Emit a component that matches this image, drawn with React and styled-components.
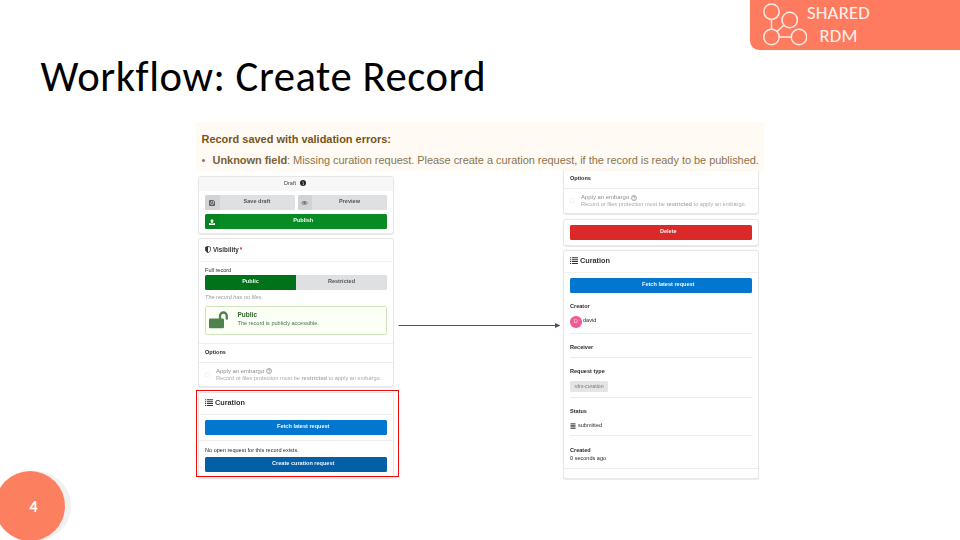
import React from 'react';
import styled, { createGlobalStyle } from 'styled-components';

const Global = createGlobalStyle`
  * { box-sizing: border-box; }
  body { margin: 0; background: #fff; }
  svg { display: block; flex-shrink: 0; }
`;

const Slide = styled.main`
  position: relative;
  width: 960px;
  height: 540px;
  overflow: hidden;
  background: #fff;
  font-family: "Liberation Sans", Arial, sans-serif;
`;
const Header = styled.header`
  display: flex;
  justify-content: flex-end;
  height: 50px;
`;
const Brand = styled.div`
  display: flex;
  width: 210px;
  height: 50px;
  padding-left: 12px;
  border-bottom-left-radius: 9px;
  background: #ff7b5f;
  color: #fff0ec;
`;
const BrandName = styled.div`
  width: 66px;
  margin: 1px 0 0 -1.5px;
  text-align: center;
  font: 400 18.7px/23px Carlito, "Open Sans", sans-serif;
  letter-spacing: 0.2px;
  white-space: nowrap;
`;
const Title = styled.h1`
  height: 72px;
  margin: 0;
  padding-left: 40.5px;
  font: 400 42.67px/53px Carlito, Lato, sans-serif;
  letter-spacing: 0.55px;
  color: #000;
  white-space: nowrap;
`;
const Figure = styled.section`
  position: relative;
  width: 568px;
  margin-left: 196px;
`;
const Alert = styled.div`
  height: 49px;
  padding: 8px 0 0 5.5px;
  background: #fffaf3;
  color: #8a7550;
  font-size: 11px;
  letter-spacing: -0.045px;
  white-space: nowrap;
  & b { color: #7c6236; }
`;
const AlertTitle = styled.div`
  height: 20.5px;
  line-height: 18px;
  font-weight: 700;
  letter-spacing: -0.02px;
  color: #775520;
`;
const AlertItem = styled.div`
  display: flex;
  line-height: 19px;
  & > i { width: 11px; font-style: normal; }
`;
const Columns = styled.div`
  display: flex;
  padding-left: 2px;
`;
const Column = styled.div`
  width: 196px;
  padding-top: ${(p) => p.$top || 0}px;
  filter: blur(0.3px);
`;
const Card = styled.section`
  height: ${(p) => p.$h}px;
  margin-bottom: ${(p) => p.$gap ?? 4.5}px;
  padding: ${(p) => (p.$open ? 4 : 0)}px 6px 0;
  border: 1px solid #e7e7e8;
  border-top-width: ${(p) => (p.$open ? 0 : 1)}px;
  border-radius: ${(p) => (p.$open ? '0 0 3px 3px' : '3px')};
  box-shadow: 0 0.5px 1px #e9e9e9;
  background: #fff;
`;
const CardTop = styled.div`
  display: flex;
  align-items: center;
  justify-content: center;
  gap: 4px;
  height: 14px;
  margin: 0 -6px 4px;
  padding-right: 2px;
  padding-bottom: 2px;
  background: #f7f7f7;
  color: #444;
  font-size: 5.6px;
`;
const Heading = styled.h2`
  display: flex;
  align-items: center;
  gap: 2px;
  height: ${(p) => p.$h || 22}px;
  margin: 0 -6px;
  padding: 0 6px 2px;
  border-bottom: 1px solid #f1f1f1;
  color: #333;
  font-size: ${(p) => p.$size || 7.3}px;
  font-weight: 700;
  white-space: nowrap;
`;
const Star = styled.span`
  margin-left: -1px;
  color: #db2828;
`;
const Row = styled.div`
  display: flex;
  gap: ${(p) => p.$gap || 0}px;
  margin-bottom: ${(p) => p.$mb || 0}px;
`;
const tones = {
  grey: ['#dfe0e1', '#555'],
  green: ['#078b23', '#f0fbf1'],
  dark: ['#007219', '#f0fbf1'],
  blue: ['#0377cf', '#eef8ff'],
  navy: ['#035fa6', '#eef8ff'],
  red: ['#db2828', '#fff0f0'],
};
const Button = styled.div`
  display: flex;
  flex: 1;
  height: 15px;
  margin-top: ${(p) => p.$mt || 0}px;
  padding-left: ${(p) => p.$indent || 0}px;
  overflow: hidden;
  border-radius: ${(p) => p.$radius || '1.5px'};
  background: ${(p) => tones[p.$tone][0]};
  color: ${(p) => tones[p.$tone][1]};
  font-size: 5.55px;
  font-weight: 700;
  line-height: 13.5px;
`;
const ButtonIcon = styled.span`
  display: flex;
  align-items: center;
  justify-content: center;
  width: 14.5px;
  background: rgba(0, 0, 0, 0.055);
  padding-top: 1px;
`;
const ButtonLabel = styled.span`
  flex: 1;
  text-align: center;
  white-space: nowrap;
`;
const Line = styled.div`
  height: ${(p) => p.$h || 7}px;
  margin-top: ${(p) => p.$mt || 0}px;
  color: ${(p) => p.$color || '#2b2b2b'};
  font-size: ${(p) => p.$size || 5.55}px;
  font-weight: ${(p) => (p.$bold ? 700 : 400)};
  font-style: ${(p) => (p.$italic ? 'italic' : 'normal')};
  line-height: ${(p) => p.$h || 7}px;
  white-space: nowrap;
`;
const Rule = styled.div`
  height: 1px;
  margin: ${(p) => p.$mt || 0}px ${(p) => (p.$wide ? -6 : 0)}px 0;
  background: #ededed;
`;
const Notice = styled.div`
  display: flex;
  gap: 10px;
  height: 28.5px;
  margin-top: 5px;
  padding: 4px 2.5px;
  border: 1px solid #cfe4bd;
  border-radius: 1.5px;
  background: #fcfff5;
`;
const Embargo = styled.div`
  display: flex;
  gap: 6px;
  padding-top: ${(p) => p.$top || 5}px;
`;
const Check = styled.span`
  width: 5px;
  height: 5px;
  margin-top: 4px;
  border: 0.5px solid #f3f3f3;
  border-radius: 1px;
`;
const Inline = styled.span`
  display: flex;
  align-items: center;
  gap: ${(p) => p.$gap || 2}px;
`;
const Connector = styled.div`
  width: 169px;
  padding: 149.5px 0 0 4px;
`;
const Highlight = styled.div`
  position: absolute;
  top: 268px;
  left: 0;
  width: 203px;
  height: 87px;
  border: 1px solid #f00b0b;
`;
const Avatar = styled.span`
  width: 11.5px;
  height: 11.5px;
  border-radius: 50%;
  background: #ee5b95;
  color: #ffd5e4;
  font-size: 5.5px;
  line-height: 11.5px;
  text-align: center;
`;
const User = styled.div`
  display: flex;
  gap: 1.5px;
  height: 12px;
  margin-top: 6.5px;
`;
const Tag = styled.div`
  width: 38px;
  height: 11px;
  margin-top: 6px;
  border-radius: 1.5px;
  background: #e5e5e5;
  color: #777;
  font-size: 5.2px;
  line-height: 10.5px;
  text-align: center;
  white-space: nowrap;
`;
const PageBadge = styled.div`
  position: absolute;
  left: -1px;
  top: 471px;
  width: 72px;
  height: 70px;
  border-radius: 50%;
  background: #f1f1f1;
`;
const PageNumber = styled.div`
  width: 70px;
  height: 70px;
  margin-left: -4.5px;
  padding-left: 8px;
  border-radius: 50%;
  background: #fc8060;
  color: #fff;
  font: 700 16px/71px Carlito, "Open Sans", sans-serif;
  text-align: center;
`;

const Logo = () => (
  <svg width="45" height="50" viewBox="0 0 45 50" fill="none" stroke="#ffeae5" strokeWidth="1.5">
    <circle cx="9.5" cy="11.7" r="7.7" />
    <circle cx="27.7" cy="20" r="7.7" />
    <circle cx="9.5" cy="37" r="7.7" />
    <circle cx="37" cy="37" r="7.7" />
    <path d="M9.5 19.4V29.3M15.2 31.4l6.6-6.1M17.2 37h12.1" />
  </svg>
);
const ListIcon = () => (
  <svg width="8" height="7" viewBox="0 0 8 7" fill="#333">
    <path d="M0 .3h1.2v1H0zM2 .3h6v1H2zM0 2.2h1.2v1H0zM2 2.2h6v1H2zM0 4.1h1.2v1H0zM2 4.1h6v1H2zM0 6h1.2v1H0zM2 6h6v1H2z" />
  </svg>
);
const ShieldIcon = () => (
  <svg width="6" height="7" viewBox="0 0 6 7">
    <path d="M3 .4 5.6 1.3v2C5.6 5 4.4 6.1 3 6.7 1.6 6.1.4 5 .4 3.3v-2z" fill="#fff" stroke="#333" strokeWidth=".8" />
    <path d="M3 .3v6.4C1.6 6.1.4 5 .4 3.3v-2z" fill="#333" />
  </svg>
);
const InfoIcon = () => (
  <svg width="6" height="6" viewBox="0 0 6 6">
    <circle cx="3" cy="3" r="3" fill="#222" />
    <path d="M2.5 2.6h.9v2M2.5 4.6h1.3M3 1v.9" stroke="#fff" strokeWidth=".5" fill="none" />
  </svg>
);
const HelpIcon = () => (
  <svg width="6" height="6" viewBox="0 0 6 6" fill="none" stroke="#888" strokeWidth=".7">
    <circle cx="3" cy="3" r="2.5" />
    <path d="M2 2.3c0-1.1 2-1 2 0S3 2.7 3 3.6M3 4v.6" />
  </svg>
);
const SaveIcon = () => (
  <svg width="6" height="6" viewBox="0 0 6 6" fill="none" stroke="#555" strokeWidth=".9">
    <path d="M.5.5h4l1 1v4h-5zM1.6.5v1.8h2.3V.5M1.6 5.5V3.8h2.8v1.7" />
  </svg>
);
const EyeIcon = () => (
  <svg width="7" height="4" viewBox="0 0 7 4">
    <path d="M.3 2C2-.1 5-.1 6.7 2 5 4.1 2 4.1.3 2z" fill="none" stroke="#666" strokeWidth=".7" />
    <circle cx="3.5" cy="1.8" r="1.2" fill="#666" />
  </svg>
);
const UploadIcon = () => (
  <svg width="6" height="6" viewBox="0 0 6 6" fill="#fff">
    <path d="M3 0 5 2.2H3.8v2H2.2v-2H1zM0 4h1.6v.8h2.8V4H6v2H0z" />
  </svg>
);
const UnlockIcon = () => (
  <svg width="19" height="18" viewBox="0 0 19 18">
    <rect x="0" y="7.5" width="15" height="9.8" rx="1.2" fill="#4f824c" />
    <path d="M11 8V4.9a3.4 3.4 0 0 1 6.8 0V7.7" fill="none" stroke="#4f824c" strokeWidth="2.3" strokeLinecap="round" />
  </svg>
);
const StatusIcon = () => (
  <svg width="6" height="6" viewBox="0 0 6 6">
    <path d="M.5.8h5M.5 2.3h5M.5 3.8h5M.5 5.3h5" stroke="#444" strokeWidth="1" />
  </svg>
);

const EmbargoOption = () => (
  <Embargo>
    <Check />
    <div>
      <Line $color="#8c8c8c" $size={5.95}><Inline>Apply an embargo <HelpIcon /></Inline></Line>
      <Line $color="#aaa" $size={5.62}>Record or files protection must be <b>restricted</b> to apply an embargo.</Line>
    </div>
  </Embargo>
);
const Action = ({ tone, icon, mt, indent, radius, children }) => (
  <Button $tone={tone} $mt={mt} $indent={indent} $radius={radius}>
    {icon && <ButtonIcon>{icon}</ButtonIcon>}
    <ButtonLabel>{children}</ButtonLabel>
  </Button>
);

export default function App() {
  return (
    <Slide>
      <Global />
      <Header>
        <Brand>
          <Logo />
          <BrandName>SHARED<br />RDM</BrandName>
        </Brand>
      </Header>
      <Title>Workflow: Create Record</Title>
      <Figure>
        <Alert>
          <AlertTitle>Record saved with validation errors:</AlertTitle>
          <AlertItem><i>•</i><span><b>Unknown field</b>: Missing curation request. Please create a curation request, if the record is ready to be published.</span></AlertItem>
        </Alert>
        <Columns>
          <Column $top={4.5}>
            <Card $h={58.5} $gap={4}>
              <CardTop>Draft <InfoIcon /></CardTop>
              <Row $gap={3} $mb={4}>
                <Action tone="grey" icon={<SaveIcon />}>Save draft</Action>
                <Action tone="grey" icon={<EyeIcon />}>Preview</Action>
              </Row>
              <Action tone="green" icon={<UploadIcon />}>Publish</Action>
            </Card>
            <Card $h={149} $gap={4.5}>
              <Heading $h={23} $size={6.3}><ShieldIcon />Visibility<Star>*</Star></Heading>
              <Line $mt={5}>Full record</Line>
              <Row $mb={4}>
                <Action tone="dark" mt={1} radius="1.5px 0 0 1.5px">Public</Action>
                <Action tone="grey" mt={1} radius="0 1.5px 1.5px 0">Restricted</Action>
              </Row>
              <Line $italic $color="#999">The record has no files.</Line>
              <Notice>
                <UnlockIcon />
                <div>
                  <Line $bold $size={6.5} $h={8.5} $color="#2c662d">Public</Line>
                  <Line $color="#3d753e">The record is publicly accessible.</Line>
                </div>
              </Notice>
              <Rule $wide $mt={8.5} />
              <Line $mt={5} $bold>Options</Line>
              <Rule $wide $mt={5.5} />
              <EmbargoOption />
            </Card>
            <Card $h={86} $gap={0}>
              <Heading $h={22}><ListIcon />Curation</Heading>
              <Action tone="blue" mt={5} indent={14.5}>Fetch latest request</Action>
              <Rule $wide $mt={5.5} />
              <Line $mt={6}>No open request for this record exists.</Line>
              <Action tone="navy" mt={3} indent={14.5}>Create curation request</Action>
            </Card>
          </Column>
          <Connector>
            <svg width="163" height="9" viewBox="0 0 163 9">
              <path d="M.5 4.5H158" stroke="#44546a" strokeWidth="1" />
              <path d="M157 2v5l5.5-2.5z" fill="#44546a" />
            </svg>
          </Connector>
          <Column>
            <Card $open $h={43}>
              <Line $bold>Options</Line>
              <Rule $wide $mt={6} />
              <EmbargoOption />
            </Card>
            <Card $h={27} $gap={4}>
              <Action tone="red" mt={5} indent={14.5}>Delete</Action>
            </Card>
            <Card $h={229.5} $gap={0}>
              <Heading $h={22.5}><ListIcon />Curation</Heading>
              <Action tone="blue" mt={5} indent={14.5}>Fetch latest request</Action>
              <Line $bold $mt={9.5}>Creator</Line>
              <User><Avatar>D</Avatar><Line $h={8}>david</Line></User>
              <Rule $mt={4.5} />
              <Line $bold $mt={10}>Receiver</Line>
              <Rule $mt={6.5} />
              <Line $bold $mt={10}>Request type</Line>
              <Tag>rdm-curation</Tag>
              <Rule $mt={5} />
              <Line $bold $mt={9.5}>Status</Line>
              <Line $mt={7.5}><Inline><StatusIcon />submitted</Inline></Line>
              <Rule $mt={6} />
              <Line $bold $mt={10.5}>Created</Line>
              <Line $mt={1}>0 seconds ago</Line>
              <Rule $wide $mt={6} />
            </Card>
          </Column>
        </Columns>
        <Highlight />
      </Figure>
      <PageBadge><PageNumber>4</PageNumber></PageBadge>
    </Slide>
  );
}
